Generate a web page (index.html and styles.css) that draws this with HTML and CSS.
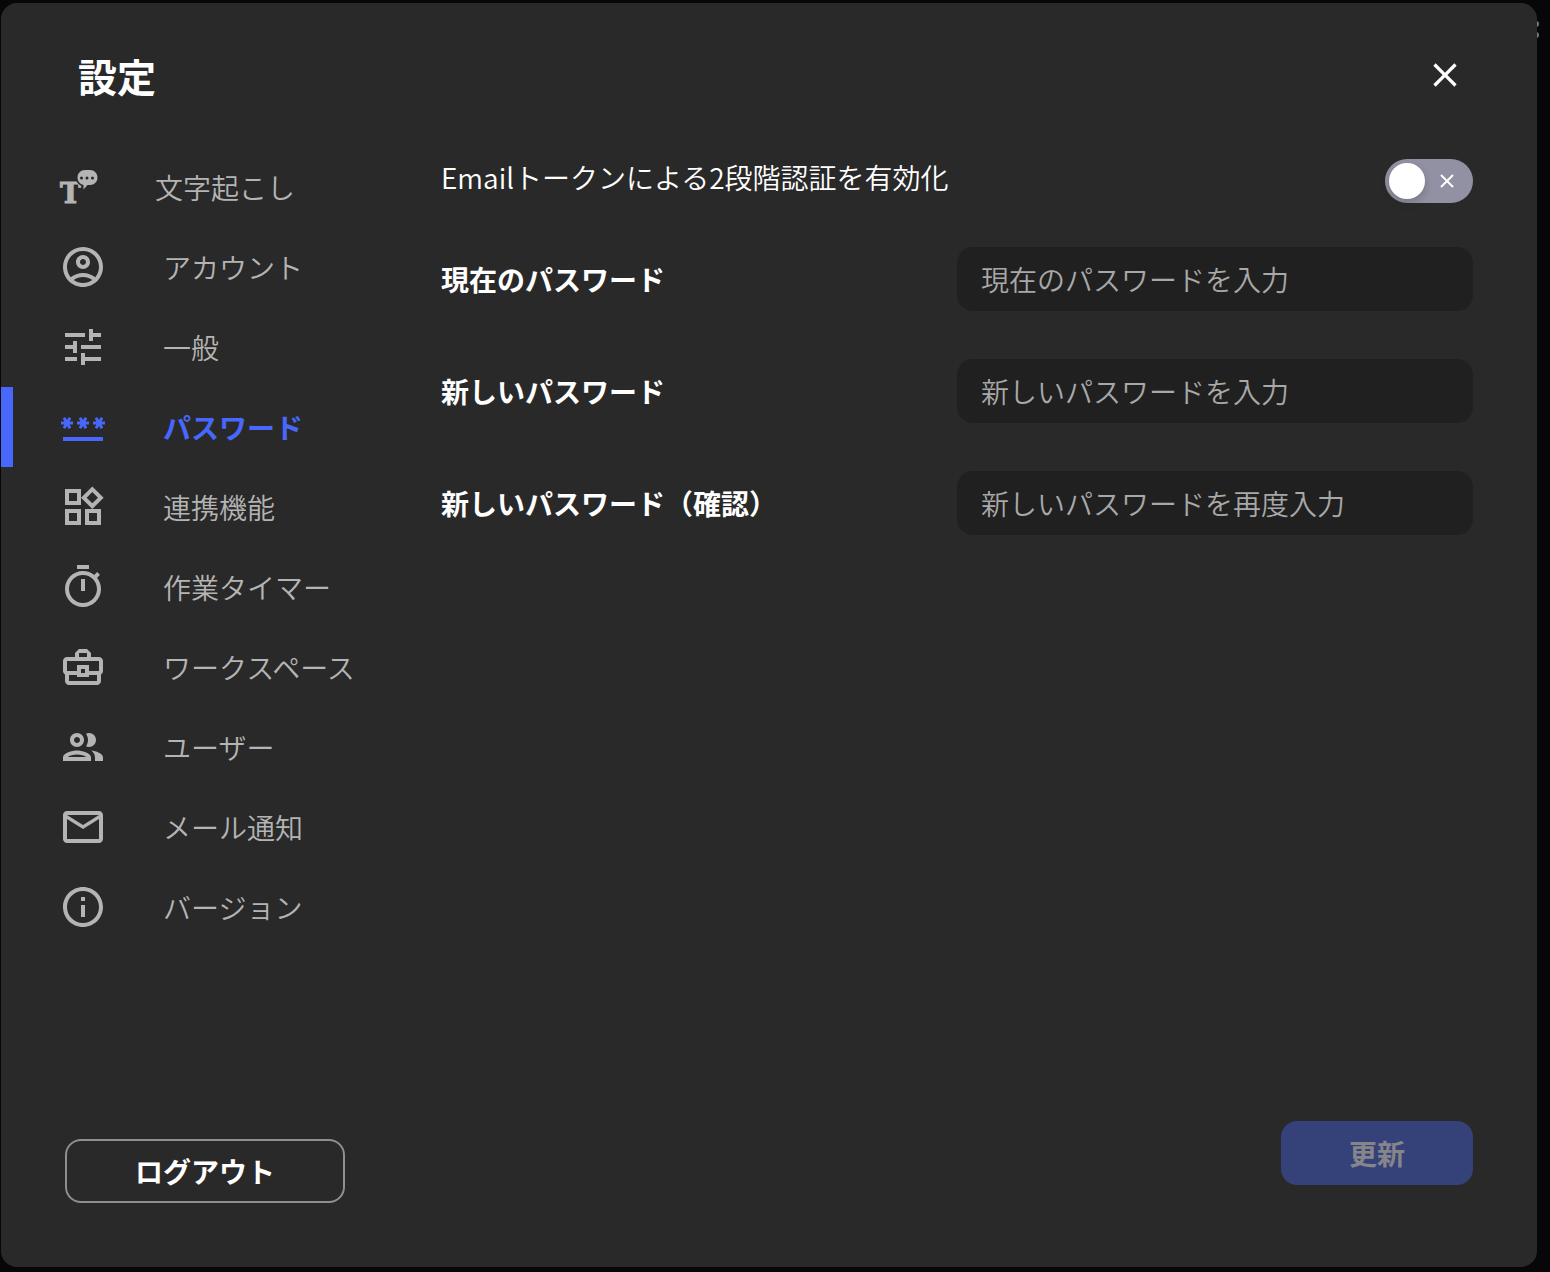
FILE: index.html
```html
<!DOCTYPE html>
<html lang="ja">
<head>
    <meta charset="UTF-8">
    <meta name="viewport" content="width=device-width, initial-scale=1.0">
    <title>設定</title>
    <link rel="stylesheet" href="styles.css">
</head>
<body>
    <svg class="page-menu" viewBox="0 0 6 18" aria-hidden="true">
        <circle cx="3" cy="3" r="3"/>
        <circle cx="3" cy="14" r="3"/>
    </svg>

    <div class="modal" role="dialog" aria-labelledby="modalTitle">
        <header class="modal-header">
            <h1 id="modalTitle">設定</h1>
            <button type="button" class="close-button" aria-label="閉じる">
                <svg viewBox="0 0 24 24"><path d="M19 6.41 17.59 5 12 10.59 6.41 5 5 6.41 10.59 12 5 17.59 6.41 19 12 13.41 17.59 19 19 17.59 13.41 12z"/></svg>
            </button>
        </header>

        <div class="modal-body">
            <aside class="sidebar">
                <nav class="menu">
                    <a href="#transcription" class="menu-item">
                        <svg class="icon-narrow" viewBox="0 0 40 48" aria-hidden="true">
                            <text class="icon-letter" x="1" y="40">T</text>
                            <path class="bubble" d="M26 7h5c4.300 0 7.500 3.200 7.500 7.500S35.300 22 31 22h-2.500L24.500 26.500V22c-3.600-.8-6-3.800-6-7.500C18.500 10.200 21.700 7 26 7z"/>
                            <circle class="dot" cx="22.500" cy="15" r="1.500"/>
                            <circle class="dot" cx="28" cy="15" r="1.500"/>
                            <circle class="dot" cx="33.500" cy="15" r="1.500"/>
                        </svg>
                        <span>文字起こし</span>
                    </a>
                    <a href="#account" class="menu-item">
                        <svg viewBox="0 0 24 24" aria-hidden="true"><path d="M12 2C6.480 2 2 6.480 2 12s4.480 10 10 10 10-4.480 10-10S17.520 2 12 2zM7.350 18.500C8.660 17.560 10.260 17 12 17s3.340.560 4.650 1.500C15.340 19.440 13.740 20 12 20s-3.340-.560-4.650-1.500zm10.790-1.380C16.450 15.800 14.320 15 12 15s-4.450.800-6.140 2.120C4.700 15.730 4 13.950 4 12c0-4.420 3.580-8 8-8s8 3.580 8 8c0 1.950-.700 3.730-1.860 5.120zM12 6c-1.930 0-3.500 1.570-3.500 3.500S10.070 13 12 13s3.500-1.570 3.500-3.500S13.930 6 12 6zm0 5c-.830 0-1.500-.670-1.500-1.500S11.170 8 12 8s1.500.670 1.500 1.500S12.830 11 12 11z"/></svg>
                        <span>アカウント</span>
                    </a>
                    <a href="#general" class="menu-item">
                        <svg viewBox="0 0 24 24" aria-hidden="true"><path d="M3 17v2h6v-2H3zM3 5v2h10V5H3zm10 16v-2h8v-2h-8v-2h-2v6h2zM7 9v2H3v2h4v2h2V9H7zm14 4v-2H11v2h10zm-6-4h2V7h4V5h-4V3h-2v6z"/></svg>
                        <span>一般</span>
                    </a>
                    <a href="#password" class="menu-item active" aria-current="page">
                        <svg viewBox="0 0 24 24" aria-hidden="true"><path d="M2 17h20v2H2v-2zm1.150-4.050L4 11.470l.850 1.480 1.300-.750-.850-1.480H7v-1.500H5.300l.850-1.470L4.850 7 4 8.470 3.150 7l-1.300.750.850 1.470H1v1.500h1.700l-.850 1.480 1.300.750zm6.700-.750 1.300.750.850-1.480.850 1.480 1.300-.750-.850-1.480H15v-1.500h-1.700l.850-1.470-1.300-.750L12 8.470 11.150 7l-1.300.750.850 1.470H9v1.500h1.700l-.850 1.480zM23 9.220h-1.700l.850-1.470-1.300-.750L20 8.470 19.150 7l-1.300.750.850 1.470H17v1.500h1.700l-.850 1.480 1.300.750.850-1.480.850 1.480 1.300-.750-.850-1.480H23v-1.500z"/></svg>
                        <span>パスワード</span>
                    </a>
                    <a href="#integrations" class="menu-item">
                        <svg viewBox="0 0 24 24" aria-hidden="true"><path d="M16.660 4.520l2.830 2.830-2.830 2.830-2.830-2.830 2.830-2.830M9 5v4H5V5h4m10 10v4h-4v-4h4M9 15v4H5v-4h4m7.660-13.310L11 7.340 16.660 13l5.660-5.660-5.660-5.650zM11 3H3v8h8V3zm10 10h-8v8h8v-8zm-10 0H3v8h8v-8z"/></svg>
                        <span>連携機能</span>
                    </a>
                    <a href="#timer" class="menu-item">
                        <svg viewBox="0 0 24 24" aria-hidden="true"><path d="M15 1H9v2h6V1zm-4 13h2V8h-2v6zm8.030-6.610l1.420-1.420c-.430-.510-.900-.990-1.410-1.410l-1.420 1.420C16.070 4.740 14.120 4 12 4c-4.970 0-9 4.030-9 9s4.020 9 9 9 9-4.030 9-9c0-2.120-.740-4.070-1.970-5.610zM12 20c-3.870 0-7-3.130-7-7s3.130-7 7-7 7 3.130 7 7-3.130 7-7 7z"/></svg>
                        <span>作業タイマー</span>
                    </a>
                    <a href="#workspace" class="menu-item">
                        <svg viewBox="0 0 24 24" aria-hidden="true"><path d="M20 7h-4V5l-2-2h-4L8 5v2H4c-1.100 0-2 .900-2 2v5c0 .750.400 1.380 1 1.730V19c0 1.110.890 2 2 2h14c1.110 0 2-.890 2-2v-3.280c.590-.350 1-.990 1-1.720V9c0-1.100-.900-2-2-2zM10 5h4v2h-4V5zM4 9h16v5h-5v-3H9v3H4V9zm9 6h-2v-2h2v2zm6 4H5v-3h4v1h6v-1h4v3z"/></svg>
                        <span>ワークスペース</span>
                    </a>
                    <a href="#users" class="menu-item">
                        <svg viewBox="0 0 24 24" aria-hidden="true"><path d="M9 13.750c-2.340 0-7 1.170-7 3.500V19h14v-1.750c0-2.330-4.660-3.500-7-3.500zM4.340 17c.840-.580 2.870-1.250 4.660-1.250s3.820.670 4.660 1.250H4.340zM9 12c1.930 0 3.500-1.570 3.500-3.500S10.930 5 9 5 5.500 6.570 5.500 8.500 7.070 12 9 12zm0-5c.830 0 1.500.670 1.500 1.500S9.830 10 9 10s-1.500-.670-1.500-1.500S8.170 7 9 7zm7.040 6.810c1.160.840 1.960 1.960 1.960 3.440V19h4v-1.750c0-2.020-3.500-3.170-5.960-3.440zM15 12c1.930 0 3.500-1.570 3.500-3.500S16.930 5 15 5c-.540 0-1.040.130-1.500.350.630.890 1 1.980 1 3.150s-.370 2.260-1 3.150c.460.220.960.350 1.500.350z"/></svg>
                        <span>ユーザー</span>
                    </a>
                    <a href="#mail" class="menu-item">
                        <svg viewBox="0 0 24 24" aria-hidden="true"><path d="M22 6c0-1.100-.900-2-2-2H4c-1.100 0-2 .900-2 2v12c0 1.100.900 2 2 2h16c1.100 0 2-.900 2-2V6zm-2 0l-8 5-8-5h16zm0 12H4V8l8 5 8-5v10z"/></svg>
                        <span>メール通知</span>
                    </a>
                    <a href="#version" class="menu-item">
                        <svg viewBox="0 0 24 24" aria-hidden="true"><path d="M11 7h2v2h-2zm0 4h2v6h-2zm1-9C6.480 2 2 6.480 2 12s4.480 10 10 10 10-4.480 10-10S17.520 2 12 2zm0 18c-4.410 0-8-3.590-8-8s3.590-8 8-8 8 3.590 8 8-3.590 8-8 8z"/></svg>
                        <span>バージョン</span>
                    </a>
                </nav>
                <button type="button" class="button logout-button">ログアウト</button>
            </aside>

            <form class="content">
                <div class="toggle-row">
                    <label for="emailToken">Emailトークンによる2段階認証を有効化</label>
                    <div class="switch">
                        <input type="checkbox" id="emailToken">
                        <svg viewBox="0 0 14 14" aria-hidden="true"><path d="M1 1l12 12M13 1L1 13"/></svg>
                    </div>
                </div>
                <div class="fields">
                    <label for="currentPassword">現在のパスワード</label>
                    <input type="password" id="currentPassword" placeholder="現在のパスワードを入力">
                    <label for="newPassword">新しいパスワード</label>
                    <input type="password" id="newPassword" placeholder="新しいパスワードを入力">
                    <label for="confirmPassword">新しいパスワード（確認）</label>
                    <input type="password" id="confirmPassword" placeholder="新しいパスワードを再度入力">
                </div>
                <button type="submit" class="button update-button" disabled>更新</button>
            </form>
        </div>
    </div>
</body>
</html>
```
FILE: styles.css
```css
* {
    box-sizing: border-box;
}

body {
    margin: 0;
    min-height: 100vh;
    padding: 3px 13px 5px 1px;
    display: flex;
    background-color: #070709;
    color: #ffffff;
    font-family: "Noto Sans CJK JP", sans-serif;
    font-size: 28px;
    font-weight: 350;
    line-height: 40px;
}

button,
input {
    font: inherit;
    color: inherit;
    border: none;
    margin: 0;
}

/* モーダルの後ろに少し見えるメニュー */
.page-menu {
    position: absolute;
    top: 21px;
    right: 11px;
    width: 6px;
    height: 18px;
    fill: #77777a;
}

.modal {
    position: relative;
    flex: 1;
    display: flex;
    flex-direction: column;
    background-color: #292929;
    border-radius: 16px;
}

.modal-header {
    display: flex;
    justify-content: space-between;
    align-items: center;
    height: 144px;
    padding: 0 72px 0 77px;
}

h1 {
    margin: 0;
    font-size: 39px;
    font-weight: 700;
}

.close-button {
    padding: 0;
    background: none;
    cursor: pointer;
}

.close-button svg {
    display: block;
    width: 40px;
    height: 40px;
    fill: #ffffff;
}

.modal-body {
    flex: 1;
    display: flex;
}

.sidebar {
    width: 440px;
    display: flex;
    flex-direction: column;
    justify-content: space-between;
    padding-bottom: 64px;
}

.menu-item {
    display: flex;
    align-items: center;
    gap: 56px;
    height: 80px;
    padding-left: 58px;
    color: #b4b4b4;
    text-decoration: none;
}

.menu-item svg {
    width: 48px;
    height: 48px;
    fill: currentColor;
}

.menu-item .icon-narrow {
    width: 40px;
}

.icon-letter {
    font-family: "DejaVu Serif", serif;
    font-size: 28px;
    font-weight: 700;
    stroke: currentColor;
    stroke-width: 1px;
}

.bubble {
    stroke: #292929;
    stroke-width: 3px;
    paint-order: stroke;
}

.dot {
    fill: #292929;
}

.menu-item.active {
    padding-left: 46px;
    border-left: 12px solid #4768fa;
    color: #4768fa;
    font-weight: 700;
}

.button {
    height: 64px;
    padding: 0;
    border-radius: 16px;
    font-weight: 700;
    cursor: pointer;
}

.logout-button {
    width: 280px;
    margin-left: 64px;
    border: 2px solid #8e8e93;
    background: none;
}

.content {
    flex: 1;
    display: flex;
    flex-direction: column;
    padding: 12px 64px 82px 0;
}

.toggle-row {
    display: flex;
    justify-content: space-between;
    align-items: flex-start;
    margin-bottom: 44px;
    line-height: 36px;
}

.switch {
    position: relative;
    height: 44px;
}

.switch input {
    display: block;
    appearance: none;
    width: 88px;
    height: 44px;
    padding: 4px;
    border-radius: 22px;
    background-color: #9290a3;
    cursor: pointer;
}

.switch input::before {
    content: "";
    display: block;
    width: 36px;
    height: 36px;
    border-radius: 50%;
    background-color: #ffffff;
    box-shadow: 0 4px 8px rgba(0, 35, 11, 0.2);
}

.switch input:checked {
    background-color: #4768fa;
}

.switch input:checked::before {
    margin-left: 44px;
}

.switch svg {
    position: absolute;
    top: 15px;
    right: 19px;
    width: 14px;
    height: 14px;
    stroke: #ffffff;
    stroke-width: 2px;
    pointer-events: none;
}

.fields {
    display: grid;
    grid-template-columns: 1fr 1fr;
    align-items: center;
    row-gap: 48px;
}

.fields label {
    font-weight: 700;
}

.fields input {
    width: 100%;
    height: 64px;
    padding: 0 24px;
    border-radius: 16px;
    background-color: #202020;
}

.fields input::placeholder {
    color: #a8a8a8;
    opacity: 1;
}

.update-button {
    width: 192px;
    margin-top: auto;
    margin-left: auto;
    background-color: #354179;
    color: #85858a;
}
```
